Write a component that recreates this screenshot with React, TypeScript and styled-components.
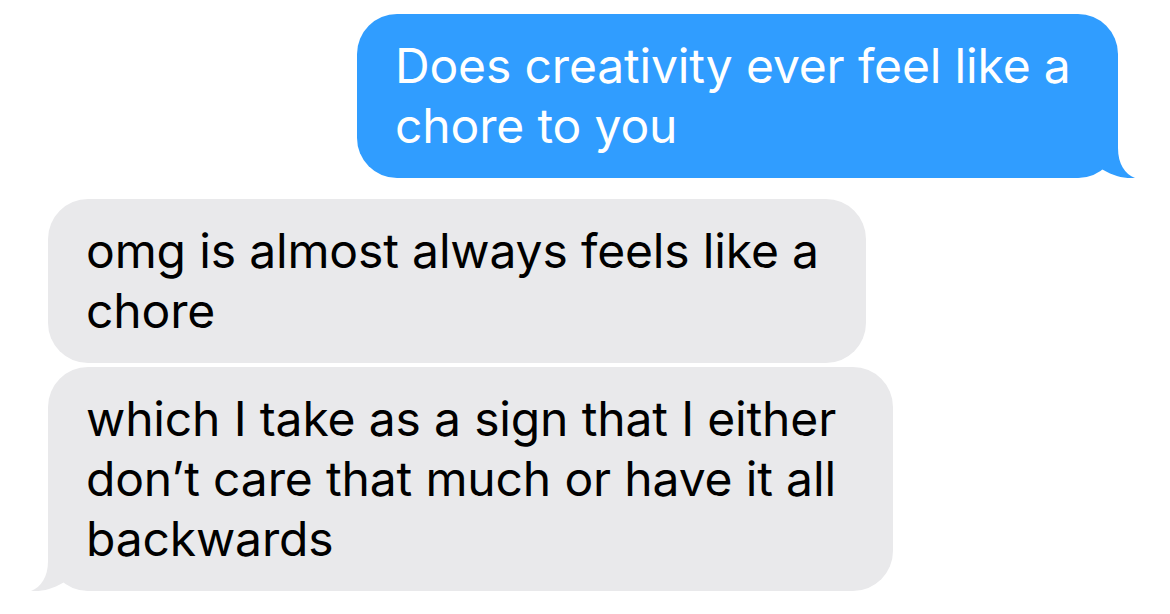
import styled, {createGlobalStyle} from "styled-components";

const GlobalStyle = createGlobalStyle`
    html, body {
        margin: 0;
        padding: 0;
        background: #ffffff;
    }
    body {
        font-family: Inter, "Noto Sans", "Liberation Sans", sans-serif;
        -webkit-font-smoothing: antialiased;
    }
`;

const Thread = styled.div`
    width: 1170px;
    height: 614px;
    box-sizing: border-box;
    padding: 14px 52px 0 48px;
    display: flex;
    flex-direction: column;
    overflow: hidden;
`;

const Row = styled.div<{$sent?: boolean; $gap: number}>`
    display: flex;
    justify-content: ${({$sent}) => ($sent ? "flex-end" : "flex-start")};
    margin-top: ${({$gap}) => $gap}px;
`;

const Bubble = styled.div<{$sent?: boolean; $width: number}>`
    position: relative;
    box-sizing: border-box;
    width: ${({$width}) => $width}px;
    padding: 22px 38px;
    border-radius: 40px;
    background: ${({$sent}) => ($sent ? "#309dff" : "#e9e9eb")};
    color: ${({$sent}) => ($sent ? "#ffffff" : "#000000")};
    font-size: 48px;
    line-height: 60px;
    letter-spacing: -0.15px;
    white-space: nowrap;
`;

const Text = styled.span`
    position: relative;
    z-index: 1;
`;

const Tail = styled.svg<{$sent?: boolean}>`
    position: absolute;
    bottom: 0;
    width: 70px;
    height: 50px;
    z-index: 0;
    ${({$sent}) =>
        $sent
            ? "right: -17px;"
            : "left: -17px; transform: scaleX(-1);"}
`;

function BubbleTail({sent, color}: {sent?: boolean; color: string}) {
    return (
        <Tail $sent={sent} viewBox="0 0 70 50">
            <path
                d="M0,0 H53 V20 C53,36 60,46 70,50 C58,51 46,47 35,40 C27,47 17,50 4,50 H0 Z"
                fill={color}
            />
        </Tail>
    );
}

export default function App() {
    return (
        <>
            <GlobalStyle />
            <Thread>
                <Row $sent $gap={0}>
                    <Bubble $sent $width={761}>
                        <BubbleTail sent color="#309dff" />
                        <Text>
                            Does creativity ever feel like a
                            <br />
                            chore to you
                        </Text>
                    </Bubble>
                </Row>
                <Row $gap={21}>
                    <Bubble $width={818}>
                        <Text>
                            omg is almost always feels like a
                            <br />
                            chore
                        </Text>
                    </Bubble>
                </Row>
                <Row $gap={4}>
                    <Bubble $width={845}>
                        <BubbleTail color="#e9e9eb" />
                        <Text>
                            which I take as a sign that I either
                            <br />
                            don’t care that much or have it all
                            <br />
                            backwards
                        </Text>
                    </Bubble>
                </Row>
            </Thread>
        </>
    );
}
